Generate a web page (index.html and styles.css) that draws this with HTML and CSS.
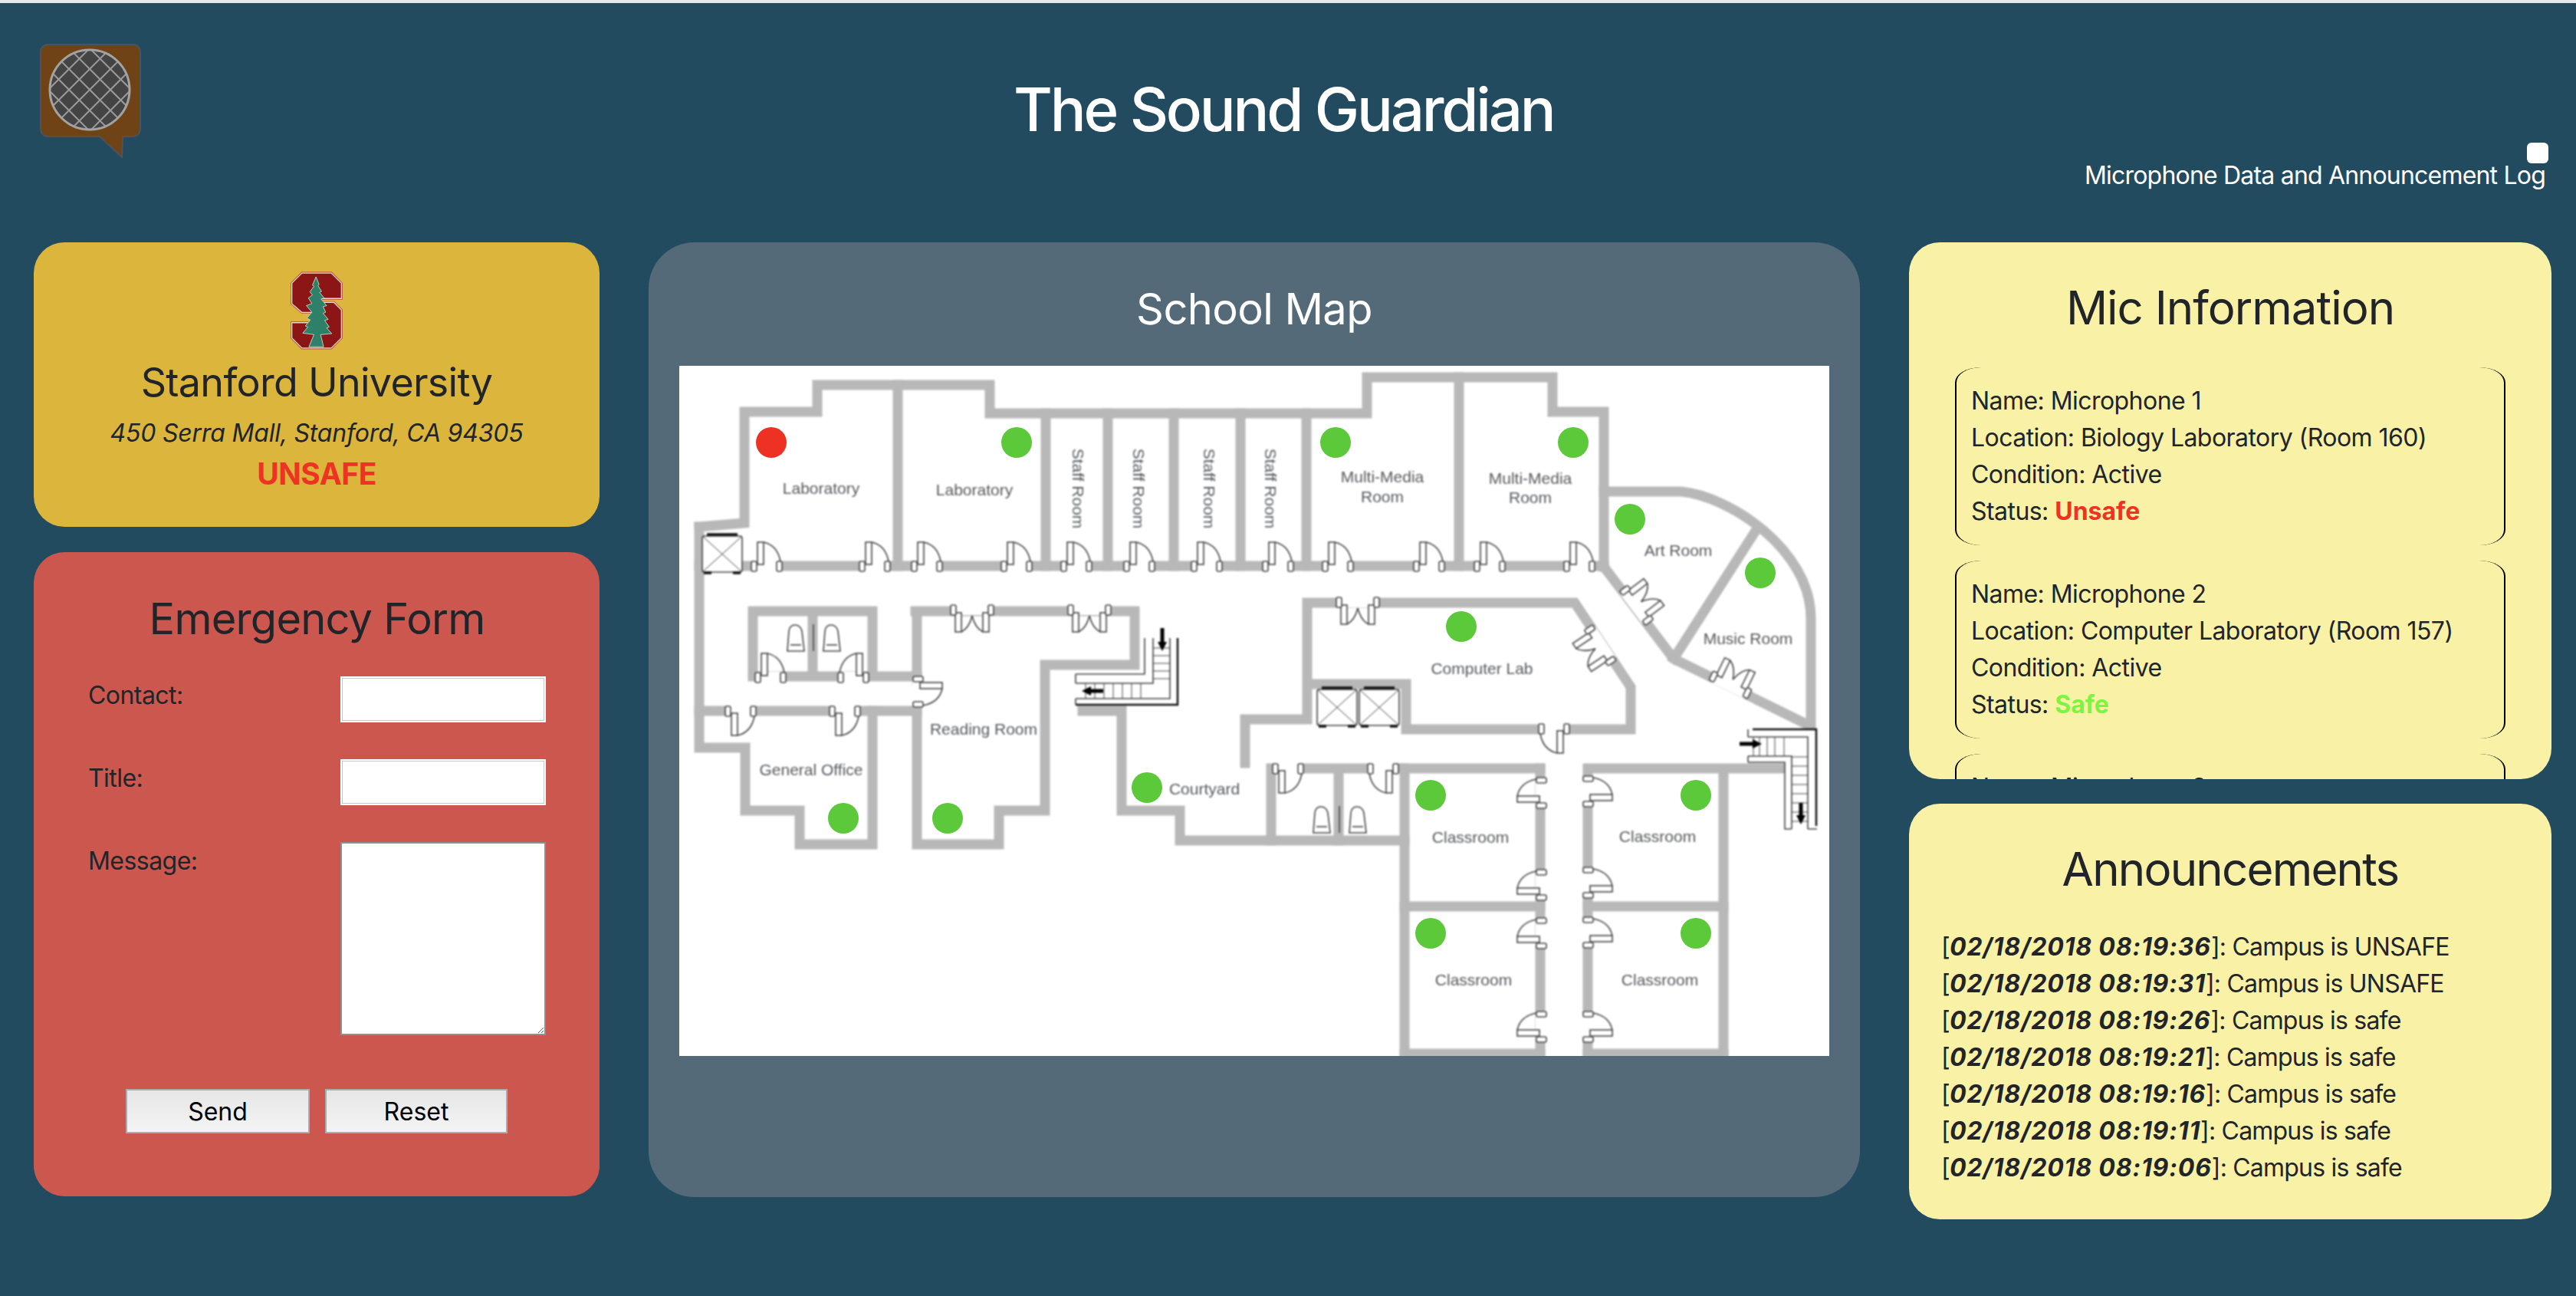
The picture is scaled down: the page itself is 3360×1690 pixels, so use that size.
FILE: index.html
```html
<!DOCTYPE html>
<html lang="en">
<head>
    <meta charset="UTF-8">
    <title>The Sound Guardian</title>
    <link rel="stylesheet" href="styles.css">
</head>
<body>
    <header class="top">
        <svg class="logo" viewBox="0 0 132 150">
            <path class="logo-bubble" d="M12 1H120Q131 1 131 12V110Q131 121 120 121H108L107 148L78 121H12Q1 121 1 110V12Q1 1 12 1Z"/>
            <clipPath id="grille"><circle cx="65" cy="60" r="52"/></clipPath>
            <circle class="logo-mic" cx="65" cy="60" r="52"/>
            <g class="logo-mesh" clip-path="url(#grille)">
                <path d="M-86 -10L54 130M-59 -10L81 130M-32 -10L108 130M-5 -10L135 130M22 -10L162 130M49 -10L189 130M76 -10L216 130"/>
                <path d="M54 -10L-86 130M81 -10L-59 130M108 -10L-32 130M135 -10L-5 130M162 -10L22 130M189 -10L49 130M216 -10L76 130"/>
            </g>
            <circle class="logo-rim" cx="65" cy="60" r="52"/>
        </svg>
        <h1 class="site-title">The Sound Guardian</h1>
        <div class="log-toggle">
            <input type="checkbox" class="log-check" id="logCheck">
            <label for="logCheck">Microphone Data and Announcement Log</label>
        </div>
    </header>

    <main class="board">
        <section class="col">
            <div class="card school">
                <svg class="school-logo" viewBox="120 45 205 305">
                    <polygon class="s-rim" points="165,50 280,50 320,90 320,150 240,150 240,165 290,165 320,195 320,305 280,345 165,345 125,305 125,245 200,245 200,205 165,205 125,170 125,90"/>
                    <polygon class="s-edge" points="165,50 280,50 320,90 320,150 240,150 240,165 290,165 320,195 320,305 280,345 165,345 125,305 125,245 200,245 200,205 165,205 125,170 125,90"/>
                    <path class="s-tree" d="M220 65L232 95L228 100L242 122L234 126L252 148L240 152L262 178L248 182L258 204L248 208L268 232L254 236L272 262L262 266L282 288L238 292L250 340H192L212 292L168 286L188 262L178 258L198 234L184 228L204 204L182 178L204 170L190 148L206 136L196 124L212 102L206 98Z"/>
                </svg>
                <h2 class="card-title">Stanford University</h2>
                <p class="address">450 Serra Mall, Stanford, CA 94305</p>
                <p class="campus-state">UNSAFE</p>
            </div>

            <form class="card emergency">
                <h2 class="card-title">Emergency Form</h2>
                <div class="form-row">
                    <label for="contact">Contact:</label>
                    <input type="text" id="contact">
                </div>
                <div class="form-row">
                    <label for="title">Title:</label>
                    <input type="text" id="title">
                </div>
                <div class="form-row">
                    <label for="message">Message:</label>
                    <textarea id="message"></textarea>
                </div>
                <div class="form-buttons">
                    <button type="button" class="btn-send">Send</button>
                    <button type="reset" class="btn-reset">Reset</button>
                </div>
            </form>
        </section>

        <section class="map-panel">
            <h2 class="map-title">School Map</h2>
            <svg class="map" viewBox="0 0 1500 900">
                <defs>
                    <g id="door">
                        <rect class="gap" x="3" y="24" width="34" height="15"/>
                        <path class="fix" d="M16 0Q34 4 38 25"/>
                        <rect class="fix" x="8" y="0" width="8" height="29"/>
                        <rect class="fix" x="0" y="25" width="7" height="13" rx="2"/>
                        <rect class="fix" x="33" y="25" width="7" height="13" rx="2"/>
                    </g>
                    <g id="double-door">
                        <rect class="gap" x="-24" y="-4" width="48" height="15"/>
                        <path class="fix" d="M-14 33Q-4 28 0 12Q4 28 14 33"/>
                        <rect class="fix" x="-22" y="8" width="8" height="25"/>
                        <rect class="fix" x="14" y="8" width="8" height="25"/>
                        <rect class="fix" x="-28" y="-2" width="7" height="13" rx="2"/>
                        <rect class="fix" x="21" y="-2" width="7" height="13" rx="2"/>
                    </g>
                    <g id="lift">
                        <rect class="fix" x="0" y="0" width="52" height="47" rx="3"/>
                        <path class="fix thin" d="M0 0L52 47M52 0L0 47"/>
                        <path class="fix heavy" d="M6 -2H46M2 48H12M40 48H50"/>
                    </g>
                    <g id="toilet">
                        <path class="fix" d="M1 35L3 9Q4 1 11 1Q18 1 20 9L23 35Z"/>
                        <path class="fix" d="M5 27H19"/>
                    </g>
                </defs>

                <g class="plan">
                    <g class="walls">
                        <path d="M26 210L85 205V60H180V25H405V62H897V15H1139V60H1206V262"/>
                        <path d="M26 210V498H86V580H157V624H252V450"/>
                        <path d="M26 261H1206M26 450H310"/>
                        <path d="M285 25V261M478 62V261M559 62V261M645 62V261M732 62V261M818 62V261M1017 15V261"/>
                        <path d="M96 405V320H252V405M96 405H310M174 320V405"/>
                        <path d="M310 320V410M310 450V624H417V580H477V390H594V320H308"/>
                        <path d="M526 450H577V580H653V619H946"/>
                        <path d="M738 518V461H819V309H1168L1241 419V474H948V415H819"/>
                        <path d="M1206 262L1297 382L1476 470V329C1476 240 1370 170 1307 164H1206M1406 212L1297 382"/>
                        <path d="M772 619V525H1123M860 525V619"/>
                        <path d="M946 525V900M1123 525V900M1185 525V900M1362 525V900M1185 525H1445"/>
                        <path d="M946 705H1123M1185 705H1362M946 897H1123M1185 897H1362"/>
                    </g>

                    <use href="#door" x="94" y="230"/>
                    <use href="#door" x="235" y="230"/>
                    <use href="#door" x="303" y="230"/>
                    <use href="#door" x="420" y="230"/>
                    <use href="#door" x="498" y="230"/>
                    <use href="#door" x="580" y="230"/>
                    <use href="#door" x="668" y="230"/>
                    <use href="#door" x="761" y="230"/>
                    <use href="#door" x="839" y="230"/>
                    <use href="#door" x="958" y="230"/>
                    <use href="#door" x="1037" y="230"/>
                    <use href="#door" x="1154" y="230"/>
                    <use href="#door" x="99" y="375"/>
                    <use href="#door" transform="translate(247,375) scale(-1,1)"/>
                    <use href="#door" transform="translate(60,482) scale(1,-1)"/>
                    <use href="#door" transform="translate(196,482) scale(1,-1)"/>
                    <use href="#door" transform="translate(343,405) rotate(90)"/>
                    <use href="#door" transform="translate(1161,505) scale(-1,-1)"/>
                    <use href="#door" transform="translate(774,557) scale(1,-1)"/>
                    <use href="#door" transform="translate(938,557) scale(-1,-1)"/>
                    <use href="#door" transform="translate(1093,577) rotate(-90)"/>
                    <use href="#door" transform="translate(1093,697) rotate(-90)"/>
                    <use href="#door" transform="translate(1093,760) rotate(-90)"/>
                    <use href="#door" transform="translate(1093,882) rotate(-90)"/>
                    <use href="#door" transform="translate(1217,575) scale(-1,1) rotate(-90)"/>
                    <use href="#door" transform="translate(1217,694) scale(-1,1) rotate(-90)"/>
                    <use href="#door" transform="translate(1217,759) scale(-1,1) rotate(-90)"/>
                    <use href="#door" transform="translate(1217,882) scale(-1,1) rotate(-90)"/>

                    <use href="#double-door" transform="translate(382,314)"/>
                    <use href="#double-door" transform="translate(535,314)"/>
                    <use href="#double-door" transform="translate(885,304)"/>
                    <use href="#double-door" transform="translate(1245,315) rotate(232.8)"/>
                    <use href="#double-door" transform="translate(1205,362) rotate(56.4)"/>
                    <use href="#double-door" transform="translate(1369,420) rotate(206)"/>

                    <use href="#lift" x="30" y="222"/>
                    <use href="#lift" x="832" y="422"/>
                    <use href="#lift" x="887" y="422"/>

                    <use href="#toilet" x="140" y="337"/>
                    <use href="#toilet" x="187" y="337"/>
                    <path class="fix" d="M175 337V372"/>
                    <use href="#toilet" x="826" y="574"/>
                    <use href="#toilet" x="873" y="574"/>
                    <path class="fix" d="M861 574V609"/>

                    <!-- stairs by the reading room -->
                    <path class="stair-fill" d="M517 402H607V355H650V442H517Z"/>
                    <path class="fix" d="M517 402H607V355M517 414H618V355M517 434H640V355M517 402V414M517 434V442"/>
                    <path class="fix heavy-line" d="M650 355V442H517"/>
                    <path class="fix thin" d="M618 368H640M618 378H640M618 388H640M618 398H640M618 408H640M530 414V434M542 414V434M554 414V434M566 414V434M578 414V434M590 414V434M602 414V434"/>
                    <path class="arrow" d="M630 342V362"/>
                    <path class="arrow-head" d="M624 360H636L630 372Z"/>
                    <path class="arrow" d="M535 424H553"/>
                    <path class="arrow-head" d="M537 418V430L525 424Z"/>

                    <!-- stairs in the far corner -->
                    <path class="stair-fill" d="M1394 474H1484V604H1442V517H1394Z"/>
                    <path class="fix" d="M1394 484H1472V604M1394 509H1451V604M1394 517H1442V604H1451M1394 474V484M1394 509V517M1472 604H1484"/>
                    <path class="fix heavy-line" d="M1400 474H1483V600"/>
                    <path class="fix thin" d="M1401 484V509M1409 484V509M1419 484V509M1429 484V509M1441 484V509M1451 510H1472M1451 522H1472M1451 534H1472M1451 546H1472M1451 558H1472M1451 570H1472M1451 582H1472M1451 594H1472"/>
                    <path class="arrow" d="M1383 493H1402"/>
                    <path class="arrow-head" d="M1400 487V499L1412 493Z"/>
                    <path class="arrow" d="M1463 570V588"/>
                    <path class="arrow-head" d="M1457 586H1469L1463 598Z"/>

                    <g class="room-names">
                        <text x="185" y="159">Laboratory</text>
                        <text x="385" y="161">Laboratory</text>
                        <text transform="translate(520,160) rotate(90)">Staff Room</text>
                        <text transform="translate(599,160) rotate(90)">Staff Room</text>
                        <text transform="translate(691,160) rotate(90)">Staff Room</text>
                        <text transform="translate(771,160) rotate(90)">Staff Room</text>
                        <text x="917" y="144">Multi-Media</text>
                        <text x="917" y="170">Room</text>
                        <text x="1110" y="146">Multi-Media</text>
                        <text x="1110" y="171">Room</text>
                        <text x="1303" y="240">Art Room</text>
                        <text x="1394" y="355">Music Room</text>
                        <text x="1047" y="394">Computer Lab</text>
                        <text x="397" y="473">Reading Room</text>
                        <text x="172" y="526">General Office</text>
                        <text x="685" y="551">Courtyard</text>
                        <text x="1032" y="614">Classroom</text>
                        <text x="1276" y="613">Classroom</text>
                        <text x="1036" y="800">Classroom</text>
                        <text x="1279" y="800">Classroom</text>
                    </g>
                </g>

                <circle class="pin alert" cx="120" cy="100" r="20"/>
                <circle class="pin" cx="440" cy="100" r="20"/>
                <circle class="pin" cx="856" cy="100" r="20"/>
                <circle class="pin" cx="1166" cy="100" r="20"/>
                <circle class="pin" cx="1240" cy="200" r="20"/>
                <circle class="pin" cx="1410" cy="270" r="20"/>
                <circle class="pin" cx="1020" cy="340" r="20"/>
                <circle class="pin" cx="214" cy="590" r="20"/>
                <circle class="pin" cx="350" cy="590" r="20"/>
                <circle class="pin" cx="610" cy="550" r="20"/>
                <circle class="pin" cx="980" cy="560" r="20"/>
                <circle class="pin" cx="1326" cy="560" r="20"/>
                <circle class="pin" cx="980" cy="740" r="20"/>
                <circle class="pin" cx="1326" cy="740" r="20"/>
            </svg>
        </section>

        <section class="col">
            <div class="card mics">
                <h2 class="card-title">Mic Information</h2>
                <div class="mic">
                    <div>Name: Microphone 1</div>
                    <div>Location: Biology Laboratory (Room 160)</div>
                    <div>Condition: Active</div>
                    <div>Status: <b class="unsafe">Unsafe</b></div>
                </div>
                <div class="mic">
                    <div>Name: Microphone 2</div>
                    <div>Location: Computer Laboratory (Room 157)</div>
                    <div>Condition: Active</div>
                    <div>Status: <b class="safe">Safe</b></div>
                </div>
                <div class="mic">
                    <div>Name: Microphone 3</div>
                </div>
            </div>

            <div class="card announcements">
                <h2 class="card-title">Announcements</h2>
                <div class="log-line">[<b><i>02/18/2018 08:19:36</i></b>]: Campus is UNSAFE</div>
                <div class="log-line">[<b><i>02/18/2018 08:19:31</i></b>]: Campus is UNSAFE</div>
                <div class="log-line">[<b><i>02/18/2018 08:19:26</i></b>]: Campus is safe</div>
                <div class="log-line">[<b><i>02/18/2018 08:19:21</i></b>]: Campus is safe</div>
                <div class="log-line">[<b><i>02/18/2018 08:19:16</i></b>]: Campus is safe</div>
                <div class="log-line">[<b><i>02/18/2018 08:19:11</i></b>]: Campus is safe</div>
                <div class="log-line">[<b><i>02/18/2018 08:19:06</i></b>]: Campus is safe</div>
            </div>
        </section>
    </main>
</body>
</html>
```
FILE: styles.css
```css
body {
    margin: 0;
    height: 1686px;
    overflow: hidden;
    border-top: 4px solid #e6e8ea;
    background-color: #234b60;
    color: #212529;
    font-family: Inter, "Noto Sans", sans-serif;
    font-size: 32px;
    line-height: 48px;
    letter-spacing: -0.55px;
}

/* header */
.top {
    display: grid;
    grid-template-columns: 1270px auto 1fr;
    height: 312px;
    padding: 0 36px 0 52px;
    box-sizing: border-box;
}
.logo {
    width: 132px;
    height: 150px;
    margin-top: 53px;
}
.logo-bubble {
    fill: #6f4315;
    stroke: #4d5358;
    stroke-width: 2;
}
.logo-mic {
    fill: #444444;
}
.logo-mesh path {
    fill: none;
    stroke: #9a9a9a;
    stroke-width: 2;
}
.logo-rim {
    fill: none;
    stroke: #a3a3a3;
    stroke-width: 3;
}
.site-title {
    margin: 85px 0 0;
    color: #ffffff;
    font-size: 78px;
    font-weight: 500;
    line-height: 108px;
    letter-spacing: -3.2px;
}
.log-toggle {
    display: flex;
    flex-direction: column;
    align-items: flex-end;
    padding-top: 182px;
    color: #ffffff;
    letter-spacing: -0.8px;
}
.log-check {
    appearance: none;
    width: 28px;
    height: 27px;
    margin: 0 0 -8px;
    border-radius: 6px;
    background-color: #ffffff;
}
.log-toggle label {
    margin-right: 4px;
}

/* three columns */
.board {
    display: grid;
    grid-template-columns: 738px 1580px 838px;
    gap: 64px;
    padding: 0 32px 0 44px;
}
.col {
    display: flex;
    flex-direction: column;
}
.card {
    box-sizing: border-box;
    border-radius: 40px;
}
.card-title {
    margin: 0;
    font-size: 56px;
    font-weight: 400;
    line-height: 68px;
    letter-spacing: -0.8px;
    text-align: center;
}

/* school card */
.school {
    height: 371px;
    margin-bottom: 33px;
    padding-top: 38px;
    background-color: #dcb53c;
    text-align: center;
}
.school-logo {
    display: block;
    width: 68px;
    height: 102px;
    margin: 0 auto;
}
.s-rim {
    fill: #8c1515;
    stroke: #b84a3c;
    stroke-width: 9;
}
.s-edge {
    fill: #8c1515;
    stroke: #f2d6ca;
    stroke-width: 4;
}
.s-tree {
    fill: #2f8068;
    stroke: #b4d2c6;
    stroke-width: 3;
}
.school .card-title {
    margin-top: 9px;
    font-size: 52px;
    letter-spacing: -0.7px;
}
.address {
    margin: 8px 0 0;
    font-style: italic;
    letter-spacing: -0.2px;
}
.campus-state {
    margin: 5px 0 0;
    color: #ee3324;
    font-size: 39px;
    font-weight: 700;
}

/* emergency form */
.emergency {
    height: 840px;
    padding: 53px 70px 0 71px;
    background-color: #cb574e;
}
.form-row {
    display: grid;
    grid-template-columns: 329px 268px;
    align-items: start;
    margin-top: 48px;
}
.form-row label {
    padding-top: 1px;
}
.emergency .card-title + .form-row {
    margin-top: 41px;
}
.form-row input,
.form-row textarea {
    display: block;
    box-sizing: border-box;
    width: 268px;
    margin: 0;
    background-color: #ffffff;
}
.form-row input {
    height: 60px;
    border: 2px solid #ffffff;
    outline: 1px solid #c8c8c8;
    outline-offset: -3px;
}
.form-row textarea {
    height: 252px;
    border: 2px solid #8a8f92;
}
.form-buttons {
    display: flex;
    gap: 20px;
    margin: 70px 0 0 49px;
}
.form-buttons button {
    box-sizing: border-box;
    height: 58px;
    padding: 0;
    border: 2px solid #a9adb0;
    background: linear-gradient(#e6e6e6, #f4f4f4);
    color: #000000;
    font-family: inherit;
    font-size: 32px;
}
.btn-send {
    width: 240px;
}
.btn-reset {
    width: 238px;
}

/* map */
.map-panel {
    box-sizing: border-box;
    height: 1245px;
    padding: 0 40px;
    border-radius: 60px;
    background-color: #546a79;
}
.map-title {
    margin: 52px 0 39px;
    color: #ffffff;
    font-size: 56px;
    font-weight: 400;
    line-height: 70px;
    letter-spacing: -0.6px;
    text-align: center;
}
.map {
    display: block;
    width: 1500px;
    height: 900px;
    background-color: #ffffff;
}
.plan {
    filter: blur(0.9px);
}
.walls path {
    fill: none;
    stroke: #b8b8b8;
    stroke-width: 13;
    stroke-linecap: square;
}
.gap {
    fill: #ffffff;
}
.fix {
    fill: #ffffff;
    stroke: #444444;
    stroke-width: 1.6;
}
path.fix {
    fill: none;
}
.fix.thin {
    stroke-width: 1;
}
.fix.heavy {
    stroke: #111111;
    stroke-width: 3.5;
}
.fix.heavy-line {
    stroke: #111111;
    stroke-width: 2.5;
}
.stair-fill {
    fill: #ffffff;
}
.arrow {
    fill: none;
    stroke: #000000;
    stroke-width: 5;
}
.arrow-head {
    fill: #000000;
}
.room-names text {
    fill: #55595d;
    font-family: "Liberation Sans", sans-serif;
    font-size: 21px;
    letter-spacing: 0;
    text-anchor: middle;
    dominant-baseline: central;
}
.pin {
    fill: #5cc93b;
}
.pin.alert {
    fill: #ed3224;
}

/* right column */
.mics,
.announcements {
    background-color: #f9f1a5;
}
.mics .card-title,
.announcements .card-title {
    font-size: 60px;
    letter-spacing: -1px;
}
.announcements .card-title {
    letter-spacing: -1.8px;
}
.mics {
    height: 700px;
    margin-bottom: 32px;
    padding: 51px 60px 0;
    overflow: hidden;
}
.mics .card-title {
    margin-bottom: 44px;
}
.mic {
    box-sizing: border-box;
    height: 232px;
    margin-bottom: 20px;
    padding: 20px 19px;
    border-style: solid;
    border-color: #000000;
    border-width: 0 2px;
    border-radius: 34px / 20px;
}
.mic b {
    letter-spacing: 0;
}
.unsafe {
    color: #ee3324;
}
.safe {
    color: #7cf542;
}
.announcements {
    height: 542px;
    padding: 51px 42px 0;
}
.announcements .card-title {
    margin-bottom: 44px;
}
.log-line {
    letter-spacing: -0.8px;
}
.log-line b {
    letter-spacing: 0.85px;
}
```
